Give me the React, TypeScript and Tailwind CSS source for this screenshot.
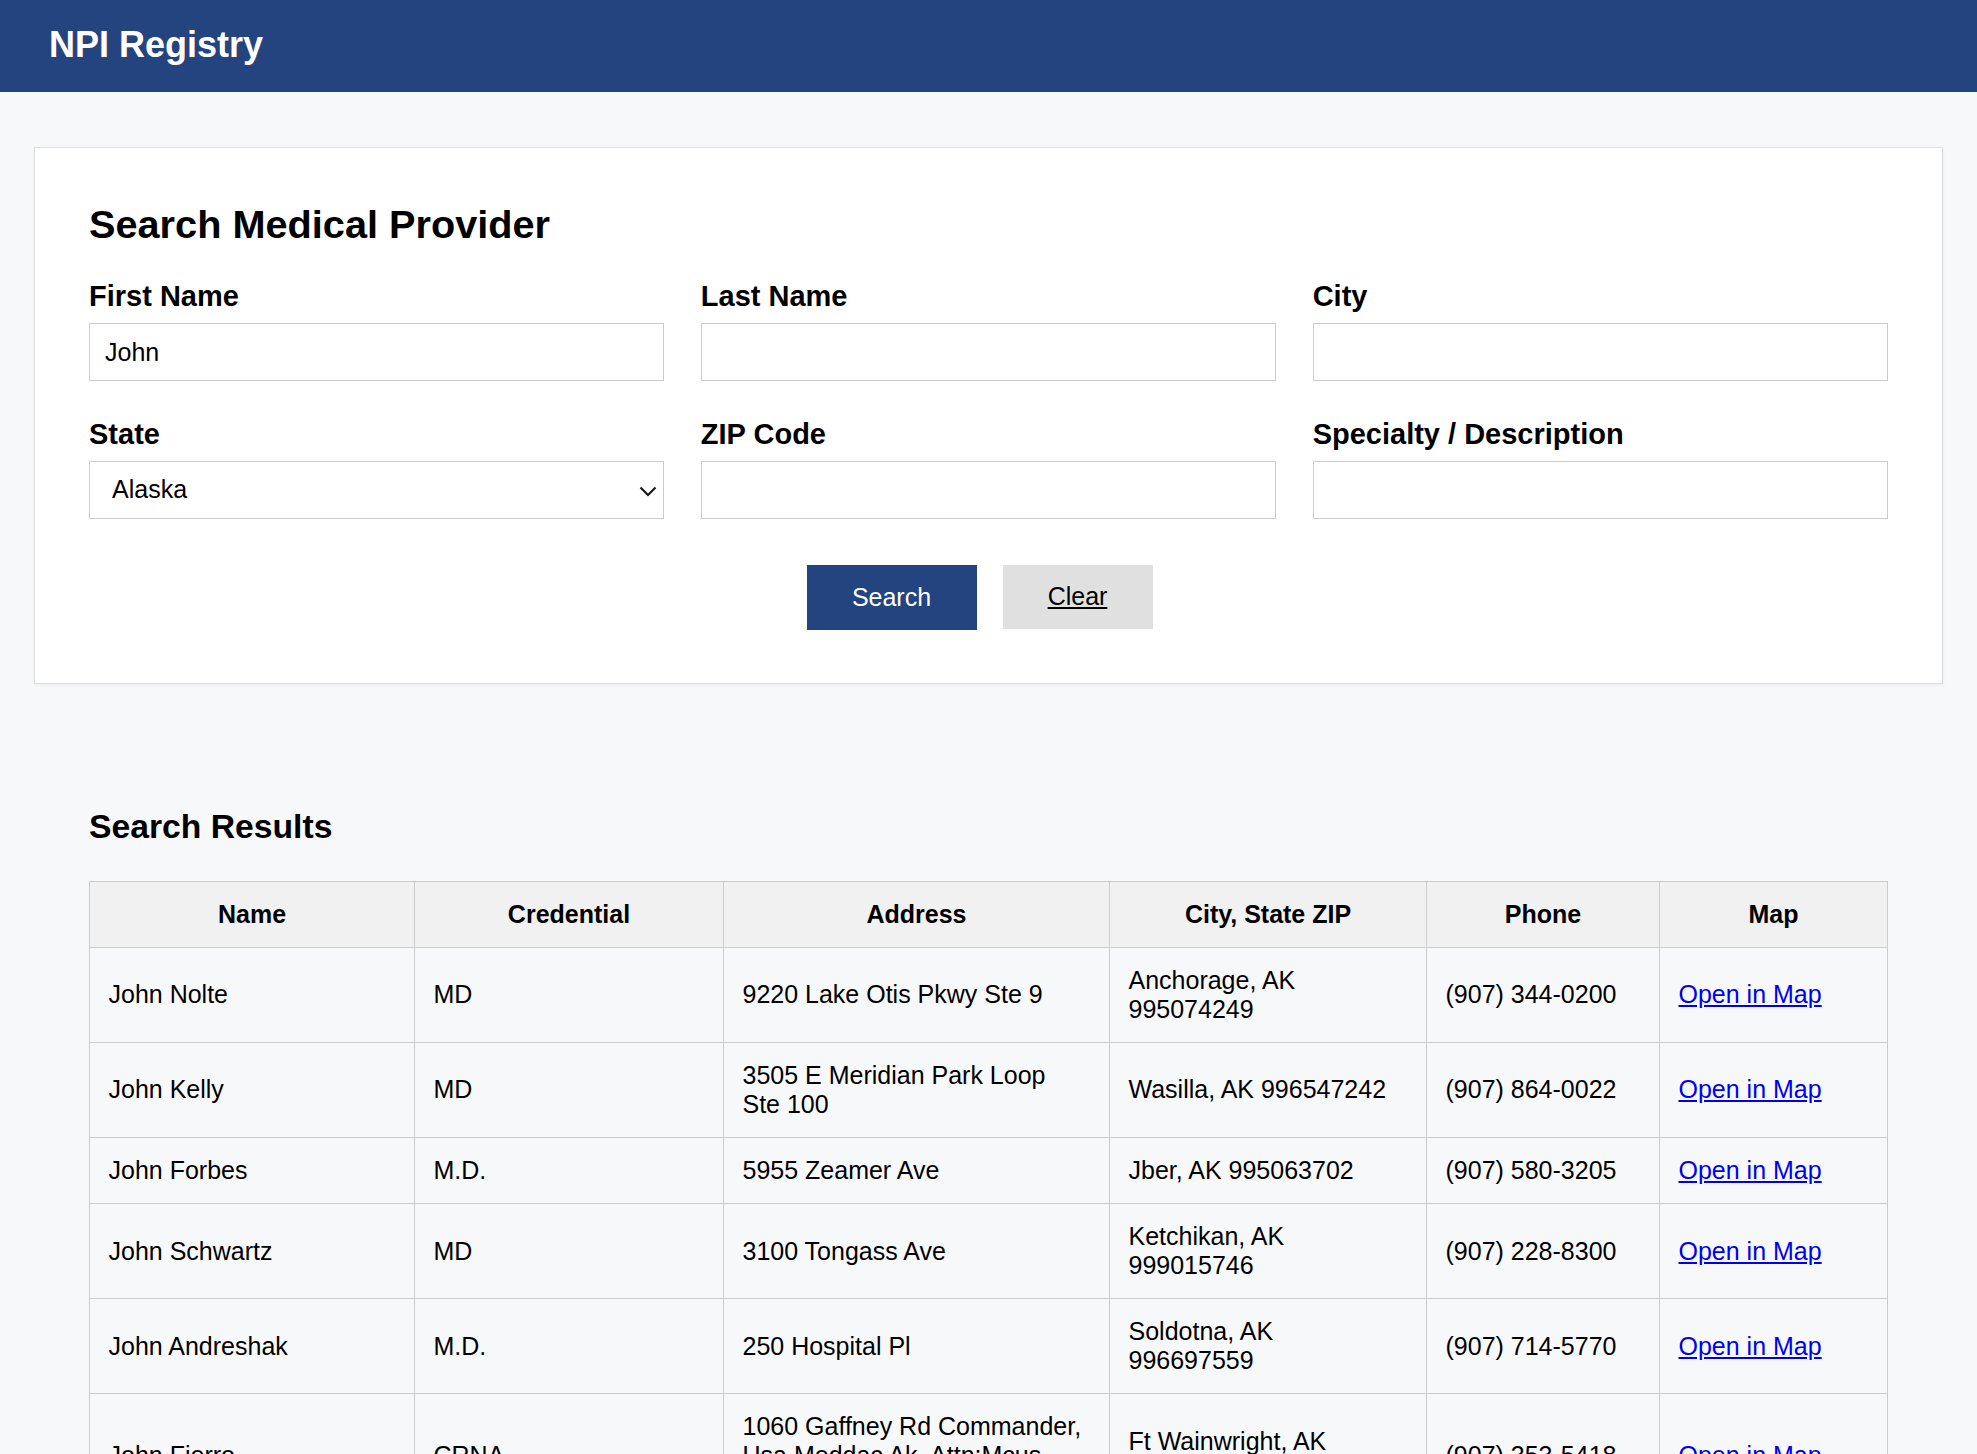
import React from "react";

// search form + results table

interface ProviderRow {
  name: string;
  credential: string;
  address: string[];
  city: string[];
  phone: string;
}

const rows: ProviderRow[] = [
  {
    name: "John Nolte",
    credential: "MD",
    address: ["9220 Lake Otis Pkwy Ste 9"],
    city: ["Anchorage, AK", "995074249"],
    phone: "(907) 344-0200",
  },
  {
    name: "John Kelly",
    credential: "MD",
    address: ["3505 E Meridian Park Loop", "Ste 100"],
    city: ["Wasilla, AK 996547242"],
    phone: "(907) 864-0022",
  },
  {
    name: "John Forbes",
    credential: "M.D.",
    address: ["5955 Zeamer Ave"],
    city: ["Jber, AK 995063702"],
    phone: "(907) 580-3205",
  },
  {
    name: "John Schwartz",
    credential: "MD",
    address: ["3100 Tongass Ave"],
    city: ["Ketchikan, AK", "999015746"],
    phone: "(907) 228-8300",
  },
  {
    name: "John Andreshak",
    credential: "M.D.",
    address: ["250 Hospital Pl"],
    city: ["Soldotna, AK", "996697559"],
    phone: "(907) 714-5770",
  },
  {
    name: "John Fierro",
    credential: "CRNA",
    address: ["1060 Gaffney Rd Commander,", "Usa Meddac Ak, Attn:Mcus", "Ac"],
    city: ["Ft Wainwright, AK", "997035900"],
    phone: "(907) 353-5418",
  },
];

const columns = ["Name", "Credential", "Address", "City, State ZIP", "Phone", "Map"];

const Lines = ({ lines }: { lines: string[] }) => (
  <>
    {lines.map((line, i) => (
      <React.Fragment key={i}>
        {i > 0 && <br />}
        {line}
      </React.Fragment>
    ))}
  </>
);

const Field = ({ label, value }: { label: string; value?: string }) => (
  <div>
    <label className="mb-[12px] block text-[29px] font-bold leading-[30px]">
      {label}
    </label>
    <input
      type="text"
      defaultValue={value}
      className="h-[58px] w-full border border-[#cccccc] bg-white px-[15px] text-[25px] text-black outline-none"
    />
  </div>
);

export default function App() {
  return (
    <div className="min-h-screen bg-[#f7f8fa] font-['Liberation_Sans',Arial,sans-serif] text-black">
      <header className="h-[92px] bg-[#23447f] pl-[49px] pt-[24px]">
        <h1 className="text-[36px] font-bold leading-[42px] text-white">
          NPI Registry
        </h1>
      </header>

      <main className="px-[34px] pt-[55px] pb-[60px]">
        <section className="border border-[#dddddd] bg-white px-[54px] pt-[53px] pb-[53px] shadow-[0_1px_3px_rgba(0,0,0,0.06)]">
          <h2 className="text-[39.7px] font-bold leading-[46px]">
            Search Medical Provider
          </h2>

          <div className="mt-[34px] grid grid-cols-3 gap-x-[36.5px] gap-y-[38px]">
            <Field label="First Name" value="John" />
            <Field label="Last Name" />
            <Field label="City" />
            <div>
              <label className="mb-[12px] block text-[29px] font-bold leading-[30px]">
                State
              </label>
              <div className="relative">
                <select
                  defaultValue="AK"
                  className="h-[58px] w-full appearance-none border border-[#cccccc] bg-white pl-[22px] text-[25px] text-black outline-none"
                >
                  <option value="">All States</option>
                  <option value="AL">Alabama</option>
                  <option value="AK">Alaska</option>
                  <option value="AZ">Arizona</option>
                </select>
                <svg
                  className="pointer-events-none absolute right-[7px] top-[25px]"
                  width="18"
                  height="11"
                  viewBox="0 0 18 11"
                  fill="none"
                >
                  <polyline
                    points="1.5,1.5 9,9 16.5,1.5"
                    stroke="#1a1a1a"
                    strokeWidth="2.2"
                  />
                </svg>
              </div>
            </div>
            <Field label="ZIP Code" />
            <Field label="Specialty / Description" />
          </div>

          <div className="mt-[46px] flex items-start justify-center gap-[26px] pr-[18px]">
            <button className="h-[65px] w-[170px] bg-[#23447f] text-[25px] text-white">
              Search
            </button>
            <button className="h-[64px] w-[150px] bg-[#e0e0e0] text-[25px] text-black underline">
              Clear
            </button>
          </div>
        </section>

        <section className="mt-[123px] px-[55px]">
          <h2 className="text-[33.7px] font-bold leading-[38px]">Search Results</h2>

          <table className="mt-[36px] w-full table-fixed border-collapse text-[25px] leading-[28.75px]">
            <colgroup>
              <col className="w-[325px]" />
              <col className="w-[309px]" />
              <col className="w-[386px]" />
              <col className="w-[317px]" />
              <col className="w-[233px]" />
              <col />
            </colgroup>
            <thead>
              <tr>
                {columns.map((col) => (
                  <th
                    key={col}
                    className="border border-[#cccccc] bg-[#f1f1f1] px-[18.5px] py-[18px] text-center font-bold"
                  >
                    {col}
                  </th>
                ))}
              </tr>
            </thead>
            <tbody>
              {rows.map((row) => (
                <tr key={row.name}>
                  <td className="border border-[#cccccc] px-[18.5px] py-[18.25px] align-middle">
                    {row.name}
                  </td>
                  <td className="border border-[#cccccc] px-[18.5px] py-[18.25px] align-middle">
                    {row.credential}
                  </td>
                  <td className="border border-[#cccccc] px-[18.5px] py-[18.25px] align-middle">
                    <Lines lines={row.address} />
                  </td>
                  <td className="border border-[#cccccc] px-[18.5px] py-[18.25px] align-middle">
                    <Lines lines={row.city} />
                  </td>
                  <td className="border border-[#cccccc] px-[18.5px] py-[18.25px] align-middle">
                    {row.phone}
                  </td>
                  <td className="border border-[#cccccc] px-[18.5px] py-[18.25px] align-middle">
                    <a href="#" className="text-[#0000ee] underline">
                      Open in Map
                    </a>
                  </td>
                </tr>
              ))}
            </tbody>
          </table>
        </section>
      </main>
    </div>
  );
}
